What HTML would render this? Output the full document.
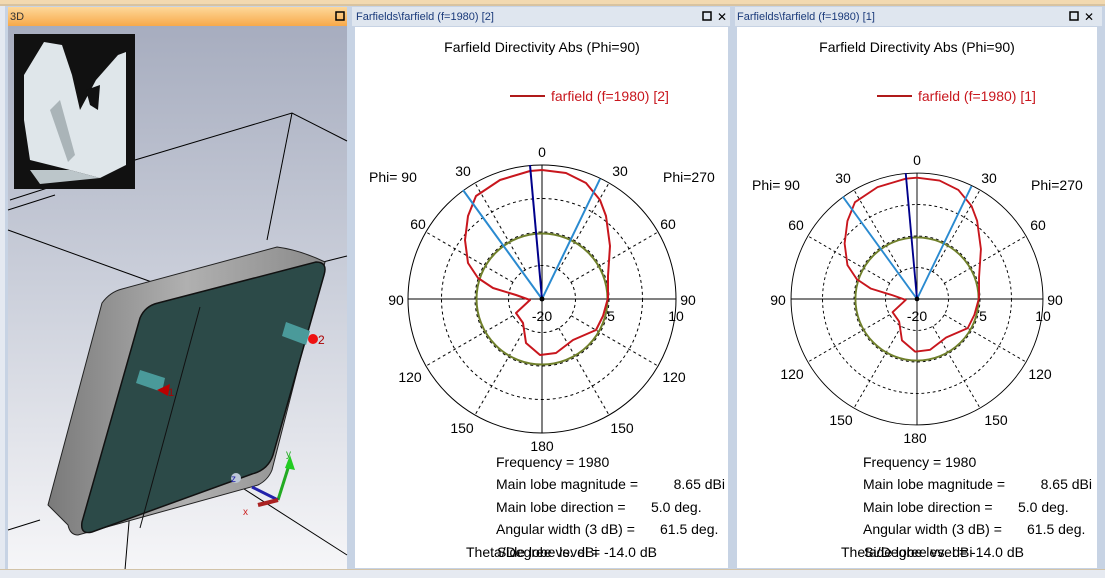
<!DOCTYPE html>
<html><head><style>
html,body{margin:0;padding:0;width:1105px;height:578px;overflow:hidden;background:#e4e9f1;font-family:"Liberation Sans",sans-serif}
</style></head><body>
<svg width="1105" height="578" xmlns="http://www.w3.org/2000/svg" font-family="Liberation Sans, sans-serif">
<defs>
<linearGradient id="bg3d" x1="0" y1="0" x2="0" y2="1"><stop offset="0" stop-color="#a7adbf"/><stop offset="0.5" stop-color="#cdd1dc"/><stop offset="1" stop-color="#f6f6f8"/></linearGradient>
<linearGradient id="org" x1="0" y1="0" x2="0" y2="1"><stop offset="0" stop-color="#fdd89a"/><stop offset="1" stop-color="#f8a94a"/></linearGradient>
<linearGradient id="rim" x1="0" y1="0" x2="1" y2="0"><stop offset="0" stop-color="#7a7a7a"/><stop offset="0.5" stop-color="#b0b0b0"/><stop offset="1" stop-color="#8a8a8a"/></linearGradient>
<g id="grid">
<circle r="33.5" fill="none" stroke="#000" stroke-dasharray="3,3"/>
<circle r="67" fill="none" stroke="#000" stroke-dasharray="3,3"/>
<circle r="100.5" fill="none" stroke="#000" stroke-dasharray="3,3"/>
<g stroke="#000" stroke-dasharray="3,3">
<line x1="16.7" y1="-29" x2="67" y2="-116"/><line x1="-16.7" y1="-29" x2="-67" y2="-116"/>
<line x1="29" y1="-16.7" x2="116" y2="-67"/><line x1="-29" y1="-16.7" x2="-116" y2="-67"/>
<line x1="29" y1="16.7" x2="116" y2="67"/><line x1="-29" y1="16.7" x2="-116" y2="67"/>
<line x1="16.7" y1="29" x2="67" y2="116"/><line x1="-16.7" y1="29" x2="-67" y2="116"/>
</g>
<circle r="134" fill="none" stroke="#000"/>
<line x1="-134" y1="0" x2="134" y2="0" stroke="#000"/>
<line x1="0" y1="-134" x2="0" y2="134" stroke="#000"/>
<circle r="65.5" fill="none" stroke="#6f7f2a" stroke-width="2"/>
<path d="M0,-129 L-12,-128 L-42,-119 L-66,-103 L-74,-83 L-77,-59 L-74,-36 L-64,-21 L-49,-11 L-26,-4 L-12,1 L-26,14 L-19,24 L-16,44 L-2,56 L14,54 L31,41 L54,31 L61,17 L66,-1 L66,-23 L68,-53 L64,-83 L58,-99 L44,-116 L24,-126 Z" fill="none" stroke="#c8161d" stroke-width="2" stroke-linejoin="round"/>
<line x1="0" y1="0" x2="-79" y2="-109" stroke="#2a8ad0" stroke-width="2"/>
<line x1="0" y1="0" x2="58" y2="-120" stroke="#2a8ad0" stroke-width="2"/>
<line x1="0" y1="0" x2="-12" y2="-134" stroke="#00008b" stroke-width="2"/>
<circle r="2.5" fill="#000"/>
</g>
</defs>
<!-- top strip -->
<rect x="0" y="0" width="1105" height="6" fill="#f2d9b0"/>
<rect x="0" y="4" width="1105" height="2" fill="#d8c3a0"/>
<!-- left panel -->
<rect x="5" y="6" width="346" height="566" fill="#c7d3e4"/>
<rect x="8" y="7" width="339" height="19" fill="url(#org)"/>
<text x="10" y="20" font-size="11" fill="#333">3D</text>
<rect x="336" y="12" width="8" height="8" fill="none" stroke="#000" stroke-width="1.5"/>
<rect x="8" y="26" width="339" height="544" fill="url(#bg3d)"/>
<!-- wire box lines -->
<g stroke="#000" stroke-width="1" fill="none">
<polyline points="10,200 135,160 292,113 347,141"/>
<line x1="292" y1="113" x2="267" y2="240"/>
<line x1="8" y1="210" x2="55" y2="195"/>
<line x1="8" y1="230" x2="160" y2="285"/>
<line x1="40" y1="520" x2="8" y2="530"/>
<line x1="230" y1="480" x2="347" y2="555"/>
<line x1="323" y1="262" x2="347" y2="256"/>
<line x1="130" y1="510" x2="125" y2="570"/>
</g>
<!-- thumbnail -->
<rect x="14" y="34" width="121" height="155" fill="#111"/>
<path d="M24,75 L44,42 L62,45 L72,75 L80,110 L96,80 L118,55 L126,52 L126,165 L100,178 L70,170 L30,160 L24,120 Z" fill="#dfe6ea"/>
<path d="M50,110 L60,100 L75,155 L68,162 Z" fill="#aab4b8"/>
<path d="M86,90 L100,85 L98,110 L90,105 Z" fill="#111"/>
<path d="M30,170 L70,170 L100,178 L40,184 Z" fill="#bcc6ca"/>
<!-- plate -->
<path d="M102,303 Q110,292 122,289 L277,247 Q300,250 325,262 L272,470 Q268,480 258,485 L78,535 Q70,535 68,525 L48,505 Z" fill="url(#rim)" stroke="#222"/>
<path d="M140,318 Q145,306 158,303 L316,262 Q328,262 324,275 L273,455 Q268,470 252,474 L92,532 Q80,535 82,522 Z" fill="#2c4a48" stroke="#111" stroke-width="1.5"/>
<line x1="200" y1="307" x2="140" y2="528" stroke="#111"/>
<path d="M140,370 L165,378 L162,392 L136,383 Z" fill="#4a9a9a"/>
<path d="M286,322 L310,331 L306,345 L282,336 Z" fill="#4a9a9a"/>
<circle cx="313" cy="339" r="5" fill="#e11"/>
<text x="318" y="344" font-size="12" fill="#a00">2</text>
<path d="M157,390 L170,384 L168,396 Z" fill="#b00"/>
<text x="168" y="396" font-size="11" fill="#a00">1</text>
<!-- axes -->
<line x1="278" y1="500" x2="290" y2="462" stroke="#2a2" stroke-width="3"/>
<path d="M285,468 L290,455 L295,470 Z" fill="#2c2"/>
<text x="286" y="457" font-size="10" fill="#2a2">y</text>
<line x1="278" y1="500" x2="252" y2="487" stroke="#22a" stroke-width="3"/>
<circle cx="236" cy="478" r="5" fill="#bcc8d8"/>
<text x="231" y="482" font-size="10" fill="#22a">z</text>
<line x1="278" y1="500" x2="258" y2="505" stroke="#a22" stroke-width="4"/>
<text x="243" y="515" font-size="10" fill="#c22">x</text>
<!-- plot panel 1 -->
<rect x="351" y="6" width="380" height="566" fill="#c7d3e4"/>
<rect x="352" y="7" width="378" height="19" fill="#dfe6ef"/>
<text x="356" y="20" font-size="11" fill="#1a3a7a">Farfields\farfield (f=1980) [2]</text>
<rect x="703" y="12" width="8" height="8" fill="none" stroke="#000" stroke-width="1.5"/>
<text x="717" y="21" font-size="12">✕</text>
<rect x="355" y="27" width="373" height="541" fill="#fff"/>
<!-- plot panel 2 -->
<rect x="731" y="6" width="374" height="566" fill="#c7d3e4"/>
<rect x="735" y="7" width="367" height="19" fill="#dfe6ef"/>
<text x="737" y="20" font-size="11" fill="#1a3a7a">Farfields\farfield (f=1980) [1]</text>
<rect x="1070" y="12" width="8" height="8" fill="none" stroke="#000" stroke-width="1.5"/>
<text x="1084" y="21" font-size="12">✕</text>
<rect x="737" y="27" width="360" height="541" fill="#fff"/>
<rect x="0" y="570" width="1105" height="8" fill="#e6eaf1"/>
<rect x="0" y="569" width="1105" height="1" fill="#d2c3a8"/>

<g font-size="14" fill="#000">
<!-- plot 1 -->
<text x="542" y="52" text-anchor="middle">Farfield Directivity Abs (Phi=90)</text>
<line x1="510" y1="96" x2="545" y2="96" stroke="#b01a1a" stroke-width="2"/>
<text x="551" y="101" fill="#c8161d">farfield (f=1980) [2]</text>
<use href="#grid" transform="translate(542,299)"/>
<text x="542" y="157" text-anchor="middle">0</text>
<text x="463" y="176" text-anchor="middle">30</text><text x="620" y="176" text-anchor="middle">30</text>
<text x="418" y="229" text-anchor="middle">60</text><text x="668" y="229" text-anchor="middle">60</text>
<text x="396" y="305" text-anchor="middle">90</text><text x="688" y="305" text-anchor="middle">90</text>
<text x="676" y="321" text-anchor="middle">10</text>
<text x="542" y="321" text-anchor="middle">-20</text>
<text x="611" y="321" text-anchor="middle">5</text>
<text x="410" y="382" text-anchor="middle">120</text><text x="674" y="382" text-anchor="middle">120</text>
<text x="462" y="433" text-anchor="middle">150</text><text x="622" y="433" text-anchor="middle">150</text>
<text x="542" y="451" text-anchor="middle">180</text>
<text x="369" y="182">Phi= 90</text>
<text x="663" y="182">Phi=270</text>
<text x="496" y="467">Frequency = 1980</text>
<text x="496" y="489">Main lobe magnitude =</text><text x="725" y="489" text-anchor="end">8.65 dBi</text>
<text x="496" y="512">Main lobe direction =</text><text x="651" y="512">5.0 deg.</text>
<text x="496" y="534">Angular width (3 dB) =</text><text x="660" y="534">61.5 deg.</text>
<text x="466" y="557">Theta/Degree vs. dBi</text>
<text x="497" y="557">Side lobe level = -14.0 dB</text>
<!-- plot 2 -->
<text x="917" y="52" text-anchor="middle">Farfield Directivity Abs (Phi=90)</text>
<line x1="877" y1="96" x2="912" y2="96" stroke="#b01a1a" stroke-width="2"/>
<text x="918" y="101" fill="#c8161d">farfield (f=1980) [1]</text>
<use href="#grid" transform="translate(917,299) scale(0.94)"/>
<text x="917" y="165" text-anchor="middle">0</text>
<text x="843" y="183" text-anchor="middle">30</text><text x="989" y="183" text-anchor="middle">30</text>
<text x="796" y="230" text-anchor="middle">60</text><text x="1038" y="230" text-anchor="middle">60</text>
<text x="778" y="305" text-anchor="middle">90</text><text x="1055" y="305" text-anchor="middle">90</text>
<text x="1043" y="321" text-anchor="middle">10</text>
<text x="917" y="321" text-anchor="middle">-20</text>
<text x="983" y="321" text-anchor="middle">5</text>
<text x="792" y="379" text-anchor="middle">120</text><text x="1040" y="379" text-anchor="middle">120</text>
<text x="841" y="425" text-anchor="middle">150</text><text x="996" y="425" text-anchor="middle">150</text>
<text x="915" y="443" text-anchor="middle">180</text>
<text x="752" y="190">Phi= 90</text>
<text x="1031" y="190">Phi=270</text>
<text x="863" y="467">Frequency = 1980</text>
<text x="863" y="489">Main lobe magnitude =</text><text x="1092" y="489" text-anchor="end">8.65 dBi</text>
<text x="863" y="512">Main lobe direction =</text><text x="1018" y="512">5.0 deg.</text>
<text x="863" y="534">Angular width (3 dB) =</text><text x="1027" y="534">61.5 deg.</text>
<text x="841" y="557">Theta/Degree vs. dBi</text>
<text x="864" y="557">Side lobe level = -14.0 dB</text>
</g>
</svg>
</body></html>
